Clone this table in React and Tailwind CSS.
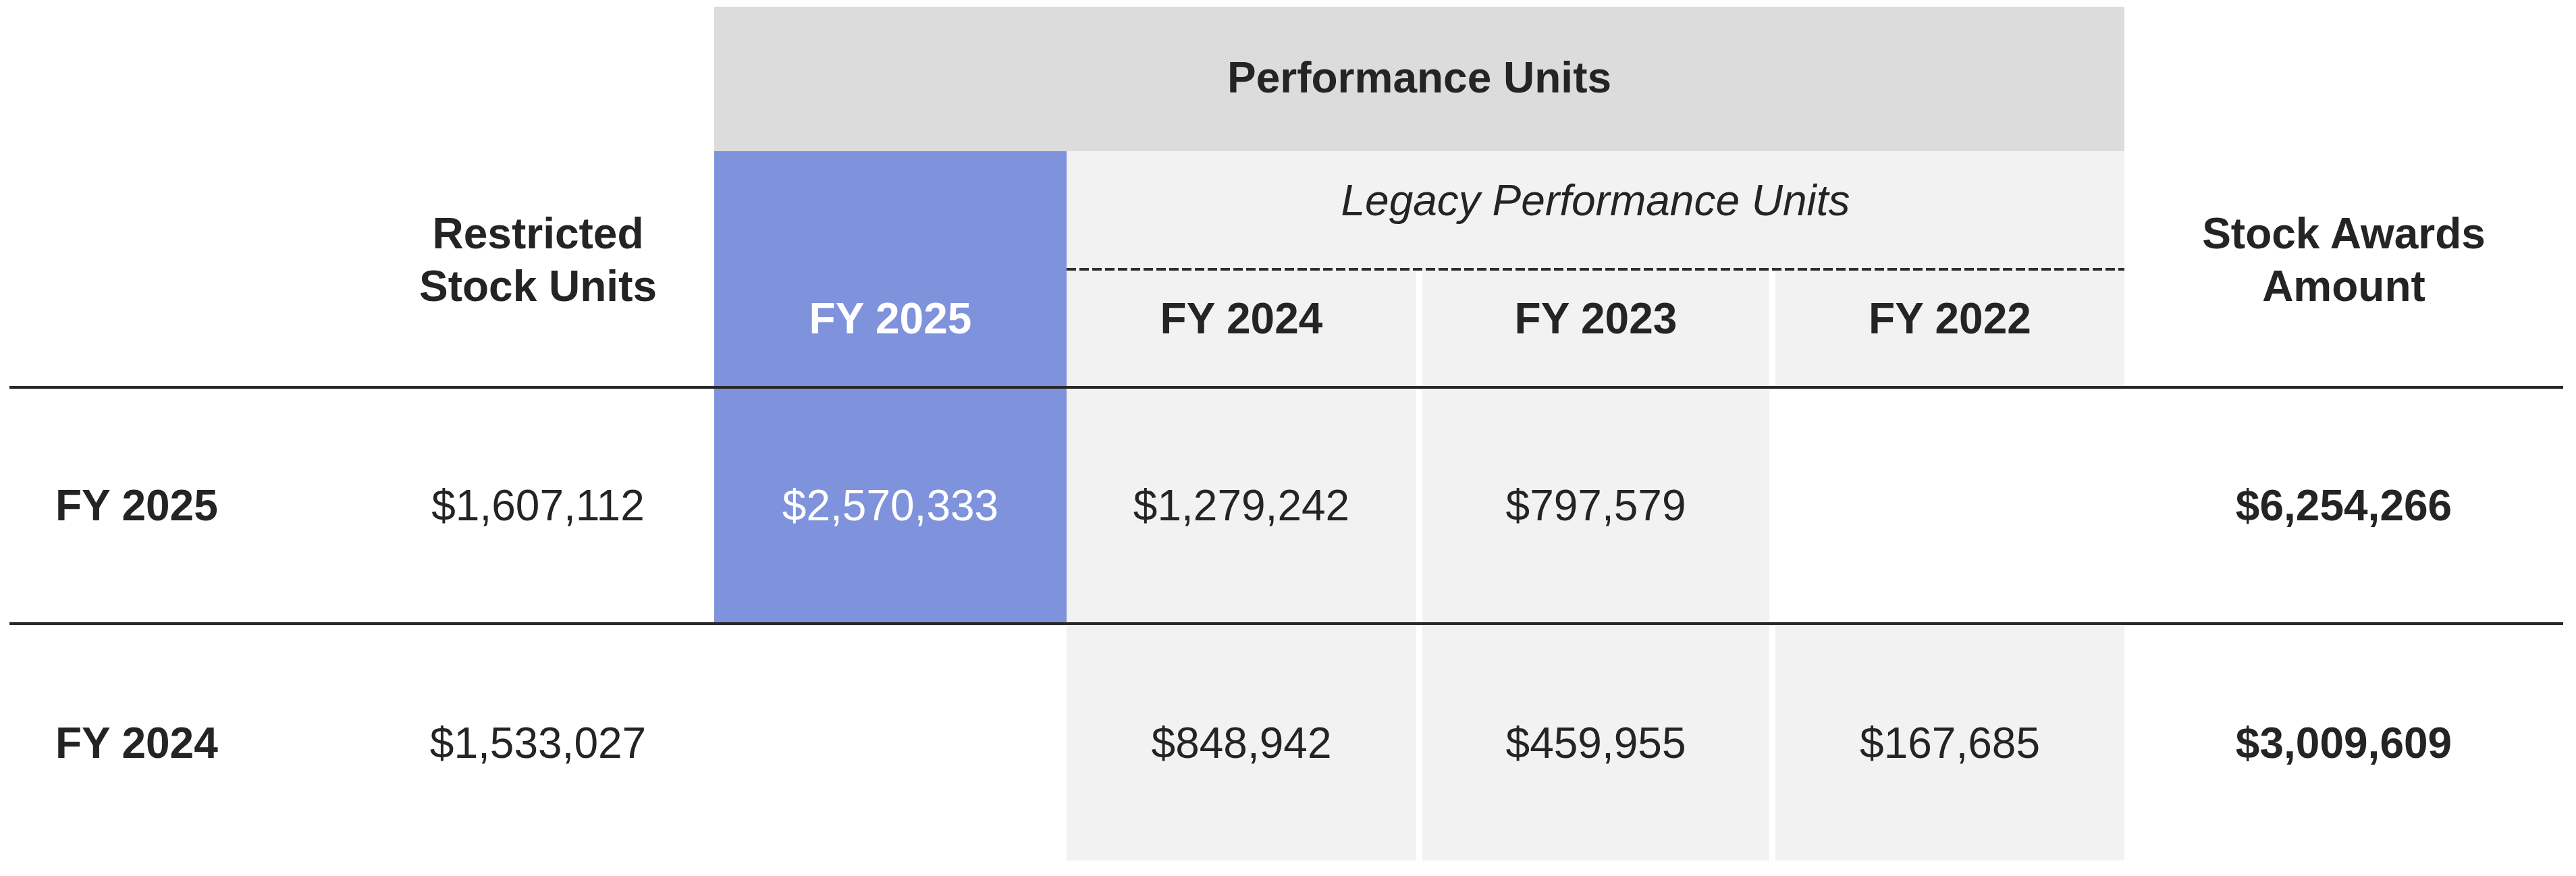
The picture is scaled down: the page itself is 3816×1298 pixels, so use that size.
import React from "react";

const FONT = { fontFamily: '"Liberation Sans", Arial, Helvetica, sans-serif' };

function Line() {
  return <div className="h-[4px] w-full bg-[#282828]" />;
}

function DataRow({ label, rsu, fy25, fy24, fy23, fy22, total, height }) {
  return (
    <div className={`flex ${height}`}>
      <div className="w-[522px] flex items-center pl-[68px] font-bold">{label}</div>
      <div className="w-[522px] flex items-center justify-center">{rsu}</div>
      <div className={`w-[522px] flex items-center justify-center ${fy25 ? "bg-[#7f92dc] text-white" : ""}`}>{fy25}</div>
      <div className="w-[518px] flex items-center justify-center bg-[#f2f2f2]">{fy24}</div>
      <div className="w-[9px]" />
      <div className="w-[514px] flex items-center justify-center bg-[#f2f2f2]">{fy23}</div>
      <div className="w-[9px]" />
      <div className={`w-[517px] flex items-center justify-center ${fy22 ? "bg-[#f2f2f2]" : ""}`}>{fy22}</div>
      <div className="w-[650px] flex items-center justify-center font-bold">{total}</div>
    </div>
  );
}

export default function App() {
  return (
    <div className="bg-white w-[3816px] h-[1298px] pt-[10px] pl-[14px] text-[#242424] text-[64px] leading-[78px]" style={FONT}>
      <div className="w-[3783px]">
        {/* Header */}
        <div className="flex h-[562px]">
          <div className="w-[522px]" />
          <div className="w-[522px] pt-[297px] text-center font-bold">
            Restricted
            <br />
            Stock Units
          </div>
          <div className="w-[2089px] flex flex-col">
            <div className="h-[214px] bg-[#dcdcdc] pt-[66px] text-center font-bold">Performance Units</div>
            <div className="flex flex-1">
              <div className="w-[522px] bg-[#7f92dc] text-white font-bold text-center pt-[209px]">FY 2025</div>
              <div className="flex-1 flex flex-col">
                <div className="h-[173px] bg-[#f2f2f2] pt-[34px] text-center italic">Legacy Performance Units</div>
                <div className="h-[4px] bg-[#f2f2f2]">
                  <div className="h-[4px] w-full bg-[repeating-linear-gradient(to_right,#2e2e2e_0px,#2e2e2e_14px,transparent_14px,transparent_19px)]" />
                </div>
                <div className="flex flex-1 font-bold">
                  <div className="w-[518px] bg-[#f2f2f2] text-center pt-[32px]">FY 2024</div>
                  <div className="w-[9px]" />
                  <div className="w-[514px] bg-[#f2f2f2] text-center pt-[32px]">FY 2023</div>
                  <div className="w-[9px]" />
                  <div className="w-[517px] bg-[#f2f2f2] text-center pt-[32px]">FY 2022</div>
                </div>
              </div>
            </div>
          </div>
          <div className="w-[650px] pt-[297px] text-center font-bold">
            Stock Awards
            <br />
            Amount
          </div>
        </div>
        <Line />
        <DataRow
          height="h-[346px]"
          label="FY 2025"
          rsu="$1,607,112"
          fy25="$2,570,333"
          fy24="$1,279,242"
          fy23="$797,579"
          fy22=""
          total="$6,254,266"
        />
        <Line />
        <DataRow
          height="h-[349px]"
          label="FY 2024"
          rsu="$1,533,027"
          fy25=""
          fy24="$848,942"
          fy23="$459,955"
          fy22="$167,685"
          total="$3,009,609"
        />
      </div>
    </div>
  );
}
